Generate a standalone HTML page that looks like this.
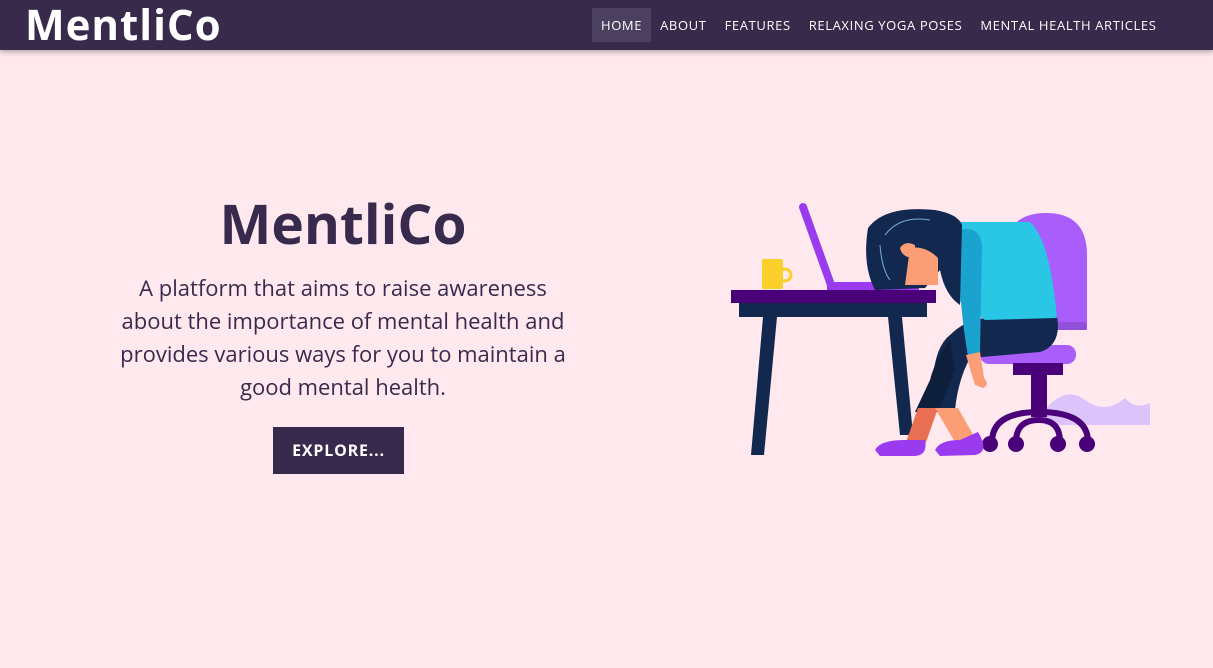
<!DOCTYPE html>
<html><head><meta charset="utf-8"><style>
*{margin:0;padding:0;box-sizing:border-box}
body{width:1213px;height:668px;background:#ffe8ee;font-family:"Open Sans","Liberation Sans",sans-serif;overflow:hidden;position:relative}
.nav{position:absolute;left:0;top:0;width:1213px;height:50px;background:#372a4b;box-shadow:0 2px 5px rgba(0,0,0,.3)}
.logo{position:absolute;left:25px;top:0;color:#fff;font-weight:bold;font-size:42px;line-height:50px;letter-spacing:1px}
.links{position:absolute;left:592px;top:8px;display:flex}
.links a{color:#fff;font-size:13px;letter-spacing:.62px;height:34px;line-height:34px;padding:0 9px;text-decoration:none}
.links a.act{background:#4b4060}
h1{position:absolute;left:93px;width:500px;top:188px;text-align:center;color:#372a4c;font-size:55px;font-weight:bold;line-height:72px}
p{position:absolute;left:110px;width:466px;top:272px;text-align:center;color:#372a4c;font-size:22px;line-height:33px}
.btn{position:absolute;left:273px;top:427px;width:131px;height:47px;background:#372a4c;color:#fff;font-weight:bold;font-size:16px;letter-spacing:.8px;text-align:center;line-height:47px}
svg{position:absolute;left:0;top:0}
</style></head><body>
<div class="nav"><div class="logo">MentliCo</div>
<div class="links"><a class="act">HOME</a><a>ABOUT</a><a>FEATURES</a><a>RELAXING YOGA POSES</a><a>MENTAL HEALTH ARTICLES</a></div></div>
<h1>MentliCo</h1>
<p>A platform that aims to raise awareness about the importance of mental health and provides various ways for you to maintain a good mental health.</p>
<div class="btn">EXPLORE...</div>
<svg width="1213" height="668">
<path d="M1045 410 Q1065 385 1085 400 T1125 398 Q1135 410 1150 403 V425 H1045Z" fill="#dcc3fb"/>
<path d="M1005 255 Q1005 213 1046 213 Q1087 213 1087 255 V330 H1005Z" fill="#a95efc"/>
<rect x="1005" y="322" width="82" height="8" rx="3" fill="#9050d8"/>
<rect x="980" y="345" width="96" height="19" rx="9" fill="#a95efc"/>
<rect x="1013" y="363" width="50" height="12" fill="#4a0078"/>
<rect x="1031" y="375" width="16" height="42" fill="#4a0078"/>
<path d="M992 442 Q992 412 1039 412 Q1088 412 1088 442" fill="none" stroke="#4a0078" stroke-width="6"/>
<path d="M1016 442 Q1016 420 1039 420 Q1060 420 1060 442" fill="none" stroke="#4a0078" stroke-width="6"/>
<circle cx="990" cy="444" r="8" fill="#4a0078"/><circle cx="1016" cy="444" r="8" fill="#4a0078"/><circle cx="1058" cy="444" r="8" fill="#4a0078"/><circle cx="1087" cy="444" r="8" fill="#4a0078"/>
<rect x="731" y="290" width="205" height="13" fill="#4a0078"/>
<rect x="739" y="303" width="188" height="14" fill="#13284e"/>
<polygon points="763,317 777,317 764,455 751,455" fill="#13284e"/>
<polygon points="888,317 902,317 913,435 900,435" fill="#13284e"/>
<line x1="803" y1="207" x2="831" y2="285" stroke="#9b3bf0" stroke-width="8" stroke-linecap="round"/>
<rect x="827" y="282" width="92" height="8" fill="#9b3bf0"/>
<circle cx="785" cy="275" r="6" fill="none" stroke="#fcd02a" stroke-width="3"/>
<rect x="762" y="259" width="21" height="30" rx="2" fill="#fcd02a"/>
<path d="M985 318 L1057 316 Q1062 345 1040 352 L970 358 Q958 380 955 410 L932 410 Q930 350 950 335 Q965 320 985 318Z" fill="#13284e"/>
<path d="M950 340 Q935 360 930 380 L915 412 L938 412 L955 370 Z" fill="#0e1f3c"/>
<polygon points="918,408 938,408 925,445 905,445" fill="#e86f52"/>
<polygon points="935,408 958,408 975,438 955,442" fill="#fb9e76"/>
<path d="M875 450 Q880 440 905 440 L925 440 Q928 455 915 456 L880 456Z" fill="#9b3bf0"/>
<path d="M935 450 Q940 440 960 440 L978 432 Q990 452 975 455 L940 456Z" fill="#9b3bf0"/>
<path d="M957 222 L1030 222 Q1050 240 1057 318 L985 320 L958 300Z" fill="#29c6e6"/>
<path d="M958 230 Q980 225 982 245 L980 352 L968 356 Q958 300 958 230Z" fill="#1ba3d0"/>
<path d="M966 355 L980 352 L984 378 Q990 385 983 388 L975 385Z" fill="#fb9e76"/>
<path d="M868 228 Q885 205 935 210 Q958 214 962 225 L960 305 Q945 295 940 270 L925 288 L875 290 Q862 265 868 228Z" fill="#13284e"/>
<path d="M910 248 Q925 245 938 258 L938 285 L905 285 Z" fill="#fb9e76"/>
<path d="M900 248 Q905 240 915 245 L915 258 Q902 258 900 248Z" fill="#fb9e76"/>
<path d="M885 235 Q900 215 930 220 M880 245 Q882 270 890 280" fill="none" stroke="#7bb0d8" stroke-width="1"/>
</svg>
</body></html>
